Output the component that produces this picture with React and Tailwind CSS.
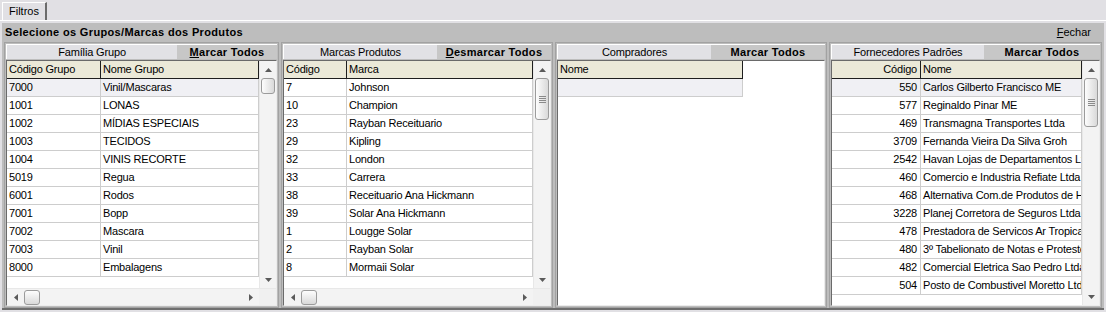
import React from "react"

const grupos = [
  ["7000", "Vinil/Mascaras"],
  ["1001", "LONAS"],
  ["1002", "MÍDIAS ESPECIAIS"],
  ["1003", "TECIDOS"],
  ["1004", "VINIS RECORTE"],
  ["5019", "Regua"],
  ["6001", "Rodos"],
  ["7001", "Bopp"],
  ["7002", "Mascara"],
  ["7003", "Vinil"],
  ["8000", "Embalagens"],
]

const marcas = [
  ["7", "Johnson"],
  ["10", "Champion"],
  ["23", "Rayban Receituario"],
  ["29", "Kipling"],
  ["32", "London"],
  ["33", "Carrera"],
  ["38", "Receituario Ana Hickmann"],
  ["39", "Solar Ana Hickmann"],
  ["1", "Lougge Solar"],
  ["2", "Rayban Solar"],
  ["8", "Mormaii Solar"],
]

// nomes longos ficam cortados pela coluna, como no grid original
const fornecedores = [
  ["550", "Carlos Gilberto Francisco ME"],
  ["577", "Reginaldo Pinar ME"],
  ["469", "Transmagna Transportes Ltda"],
  ["3709", "Fernanda Vieira Da Silva Groh"],
  ["2542", "Havan Lojas de Departamentos Ltda"],
  ["460", "Comercio e Industria Refiate Ltda"],
  ["468", "Alternativa Com.de Produtos de Higiene"],
  ["3228", "Planej Corretora de Seguros Ltda"],
  ["478", "Prestadora de Servicos Ar Tropical"],
  ["480", "3º Tabelionato de Notas e Protestos"],
  ["482", "Comercial Eletrica Sao Pedro Ltda"],
  ["504", "Posto de Combustivel Moretto Ltda"],
]

function Arrow({ dir }) {
  const pts = {
    up: "0,4 3.5,0 7,4",
    down: "0,0 7,0 3.5,4",
    left: "4,0 4,7 0,3.5",
    right: "0,0 0,7 4,3.5",
  }[dir]
  const w = dir === "up" || dir === "down" ? 7 : 4
  const h = dir === "up" || dir === "down" ? 4 : 7
  return (
    <svg width={w} height={h} viewBox={`0 0 ${w} ${h}`}>
      <polygon points={pts} fill="#5a5a5a" />
    </svg>
  )
}

function Grip() {
  return (
    <div className="flex flex-col gap-[1px]">
      {[0, 1, 2, 3].map((i) => (
        <div key={i} className="w-[7px] h-[1px] bg-[#8a8a8a]" />
      ))}
    </div>
  )
}

function VScroll({ thumb, grip }) {
  return (
    <div className="w-[17px] flex flex-col bg-[#f3f3f3] border-l border-[#e8e8e8]">
      <div className="h-[17px] flex items-center justify-center">
        <Arrow dir="up" />
      </div>
      <div className="flex-1 px-[1px]">
        <div
          className="rounded-[3px] border border-[#9b9b9b] bg-gradient-to-r from-[#fdfdfd] to-[#d9d9d9] flex items-center justify-center"
          style={{ height: thumb }}
        >
          {grip && <Grip />}
        </div>
      </div>
      <div className="h-[17px] flex items-center justify-center">
        <Arrow dir="down" />
      </div>
    </div>
  )
}

function HScroll() {
  return (
    <div className="h-[17px] flex bg-[#f3f3f3] border-t border-[#e8e8e8]">
      <div className="flex-1 flex items-center">
        <div className="w-[17px] flex items-center justify-center">
          <Arrow dir="left" />
        </div>
        <div className="w-[16px] h-[15px] rounded-[3px] border border-[#9b9b9b] bg-gradient-to-b from-[#fdfdfd] to-[#d9d9d9]" />
        <div className="flex-1" />
        <div className="w-[17px] flex items-center justify-center">
          <Arrow dir="right" />
        </div>
      </div>
      <div className="w-[17px] bg-[#f0f0f0]" />
    </div>
  )
}

function PanelHeader({ title, action, actionWidth, underline }) {
  return (
    <div className="flex h-[15px] mx-[1px] mt-[1px] border-t border-l border-white">
      <div className="flex-1 bg-[#e1e1e5] flex items-center justify-center text-[11px] leading-none tracking-[-0.15px]">
        {title}
      </div>
      <div
        className="bg-[#c7c7c7] flex items-center justify-center text-[11px] leading-none font-bold tracking-[0.3px]"
        style={{ width: actionWidth }}
      >
        {underline ? (
          <span>
            <span className="underline">{action[0]}</span>
            {action.slice(1)}
          </span>
        ) : (
          action
        )}
      </div>
    </div>
  )
}

function Row({ cells, widths, first, right }) {
  return (
    <div className={`flex h-[18px] ${first ? "bg-[#f0f0f4]" : "bg-white"}`}>
      {cells.map((c, i) => (
        <div
          key={i}
          className={`h-[18px] border-b border-r border-[#cdcdcd] overflow-hidden whitespace-nowrap flex items-center text-[11px] tracking-[-0.2px] ${
            i === 0 && right ? "justify-end pr-[3px]" : "pl-[2px]"
          } ${i === cells.length - 1 ? "flex-1" : ""}`}
          style={i === cells.length - 1 ? undefined : { width: widths[i] }}
        >
          {c}
        </div>
      ))}
    </div>
  )
}

function HeaderRow({ cells, widths, right }) {
  return (
    <div className="flex h-[18px]">
      {cells.map((c, i) => (
        <div
          key={i}
          className={`h-[18px] bg-[#ebe9d8] border-b border-r border-[#1e1e1e] flex items-center text-[11px] tracking-[-0.2px] whitespace-nowrap ${
            i === 0 && right ? "justify-end pr-[3px]" : "pl-[2px]"
          } ${i === cells.length - 1 ? "flex-1" : ""}`}
          style={i === cells.length - 1 ? undefined : { width: widths[i] }}
        >
          {c}
        </div>
      ))}
    </div>
  )
}

function Grid({ head, rows, widths, right, thumb, grip, hscroll, selectFirst }) {
  return (
    <div className="flex-1 mt-[1px] mx-[1px] mb-[1px] flex flex-col border border-t-[#6a6a6a] border-l-[#6a6a6a] border-r-[#ececec] border-b-[#ececec] bg-white min-h-0">
      <div className="flex flex-1 min-h-0">
        <div className="flex-1 overflow-hidden">
          <HeaderRow cells={head} widths={widths} right={right} />
          {rows.map((r, i) => (
            <Row key={i} cells={r} widths={widths} right={right} first={selectFirst && i === 0} />
          ))}
        </div>
        <VScroll thumb={thumb} grip={grip} />
      </div>
      {hscroll && <HScroll />}
    </div>
  )
}

export default function App() {
  return (
    <div className="w-[1106px] h-[312px] bg-[#e1e0e4] flex flex-col font-['Liberation_Sans',Arial,sans-serif] text-black overflow-hidden">
      {/* TAB STRIP */}
      <div className="h-[20px] flex items-end pl-[2px]">
        <div className="h-[18px] px-[6px] flex items-center text-[11px] border-t border-l border-white border-r-2 border-r-[#6b6b6b] bg-[#e1e0e4]">
          Filtros
        </div>
      </div>
      <div className="flex-1 border-t border-white px-[2px] pt-[2px] pb-[2px] flex flex-col min-h-0">
        <div className="flex-1 bg-[#bdbdbd] flex flex-col border-b-2 border-[#6e6e6e] min-h-0">
          {/* TITLE */}
          <div className="h-[19px] flex items-center justify-between px-[3px]">
            <span className="text-[11px] font-bold tracking-[0.35px]">
              Selecione os Grupos/Marcas dos Produtos
            </span>
            <span className="text-[11px] mr-[10px]">
              <span className="underline">F</span>echar
            </span>
          </div>

          {/* PANELS */}
          <div className="flex-1 flex gap-[2px] px-[2px] min-h-0">
            <div className="w-[275px] flex flex-col border border-[#a2a2a2]">
              <PanelHeader title="Família Grupo" action="Marcar Todos" actionWidth={100} underline />
              <Grid
                head={["Código Grupo", "Nome Grupo"]}
                rows={grupos}
                widths={[94]}
                thumb={16}
                hscroll
                selectFirst
              />
            </div>

            <div className="w-[272px] flex flex-col border border-[#a2a2a2]">
              <PanelHeader title="Marcas Produtos" action="Desmarcar Todos" actionWidth={114} underline />
              <Grid
                head={["Código", "Marca"]}
                rows={marcas}
                widths={[63]}
                thumb={42}
                grip
                hscroll
              />
            </div>

            <div className="w-[272px] flex flex-col border border-[#a2a2a2]">
              <PanelHeader title="Compradores" action="Marcar Todos" actionWidth={114} />
              <div className="flex-1 mt-[1px] mx-[1px] mb-[1px] border border-t-[#6a6a6a] border-l-[#6a6a6a] border-r-[#ececec] border-b-[#ececec] bg-white">
                <div className="w-[185px]">
                  <div className="h-[18px] bg-[#ebe9d8] border-b border-r border-[#1e1e1e] flex items-center pl-[2px] text-[11px] tracking-[-0.2px]">
                    Nome
                  </div>
                  <div className="h-[18px] bg-[#f0f0f4] border-b border-r border-[#cdcdcd]" />
                </div>
              </div>
            </div>

            <div className="w-[273px] flex flex-col border border-[#a2a2a2]">
              <PanelHeader title="Fornecedores Padrões" action="Marcar Todos" actionWidth={116} />
              <Grid
                head={["Código", "Nome"]}
                rows={fornecedores}
                widths={[89]}
                right
                thumb={49}
                grip
                selectFirst
              />
            </div>
          </div>
        </div>
      </div>
    </div>
  )
}
